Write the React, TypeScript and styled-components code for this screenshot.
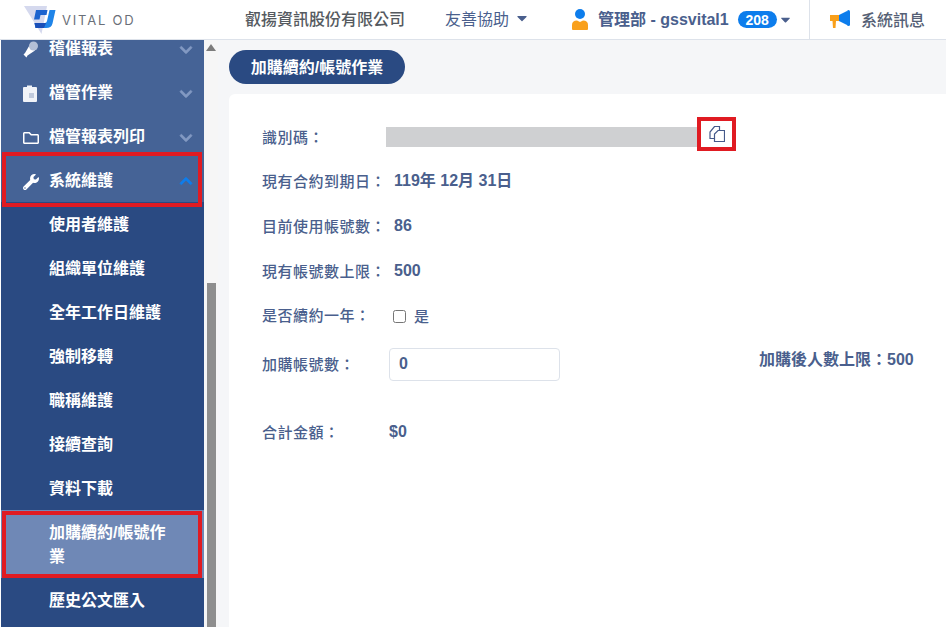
import React from "react";
import styled, { createGlobalStyle } from "styled-components";
import { FaChevronDown, FaChevronUp, FaCaretDown, FaWrench, FaRegFolder } from "react-icons/fa";

const Global = createGlobalStyle`
  html, body { margin: 0; padding: 0; height: 100%; overflow: hidden; background: #f5f6f8; }
  body { font-family: "Liberation Sans", "Noto Sans CJK TC", sans-serif; }
  #root { height: 100%; }
`;

const Page = styled.div`
  width: 946px; height: 627px; display: flex; flex-direction: column; overflow: hidden;
`;
const Header = styled.header`
  height: 40px; flex: none; box-sizing: border-box; display: flex; align-items: center;
  background: #fff; border-bottom: 1px solid #dde2ea;
`;
const LogoBox = styled.div`
  width: 245px; height: 39px; flex: none; display: flex; align-items: center; padding-left: 24px; box-sizing: border-box;
`;
const LogoText = styled.span`
  margin-left: 6px; font-family: "Inter", "Liberation Sans", sans-serif; font-size: 13px; letter-spacing: 1.8px; color: #6a6f78; white-space: nowrap;
`;
const Company = styled.span`
  font-size: 16px; font-weight: 500; color: #555a60; width: 200px; flex: none; white-space: nowrap; margin-bottom: 3px;
`;
const Help = styled.div`
  width: 127px; flex: none; display: flex; align-items: center; gap: 5px; font-size: 16px; color: #4a5f8d; white-space: nowrap; margin-bottom: 3px;
`;
const User = styled.div`
  width: 237px; flex: none; display: flex; align-items: center; font-weight: 700; color: #4a5f8d; white-space: nowrap;
`;
const UserName = styled.span`
  margin-left: 10px; margin-bottom: 3px; font-size: 16px;
`;
const Badge = styled.span`
  width: 39px; height: 17px; margin-left: 9px; margin-right: 1px; border-radius: 9px; background: #0d7dec; color: #fff; font-size: 14px; font-weight: 700; display: flex; align-items: center; justify-content: center;
`;
const Notice = styled.div`
  flex: 1; height: 39px; border-left: 1px solid #dde2ea; display: flex; align-items: center; padding-left: 20px; gap: 10px; font-size: 16px; font-weight: 500; color: #555f75; white-space: nowrap;
`;
const NoticeText = styled.span`
  margin-bottom: 2px;
`;

const Body = styled.div`
  flex: 1; display: flex; min-height: 0;
`;
const Side = styled.nav`
  width: 204px; flex: none; background: #2a4a82; overflow: hidden; position: relative;
  border-left: 1px solid #fff; box-sizing: border-box;
`;
const MenuList = styled.div`
  margin-top: -14px;
`;
const Parent = styled.div`
  height: 44px; display: flex; align-items: center; background: #456396; color: #fff; font-size: 16px; font-weight: 700; position: relative;
`;
const ParentIcon = styled.span`
  width: 48px; flex: none; display: flex; justify-content: center; padding-left: 20px; padding-right: 9px; margin-top: 3px; box-sizing: border-box;
  svg { flex: none; }
`;
const ParentLabel = styled.span`
  flex: 1; white-space: nowrap; margin-bottom: 2px;
`;
const Chevron = styled.span<{ $up?: boolean }>`
  width: 20px; margin-right: 8px; margin-top: ${p => (p.$up ? "1px" : "3px")}; flex: none; display: flex; justify-content: center; font-size: 14px; color: ${p => (p.$up ? "#0d7dec" : "#8299c2")};
  svg { stroke: currentColor; stroke-width: 24px; }
`;
const Child = styled.div<{ $active?: boolean }>`
  min-height: 44px; display: flex; align-items: center; padding: ${p => (p.$active ? "11px 30px 9px 48px" : "2px 30px 0 48px")}; box-sizing: border-box;
  background: ${p => (p.$active ? "#6f88b6" : "transparent")}; color: #fff; font-size: 16px; font-weight: 700; line-height: 24px; position: relative;
`;
const Mark = styled.span<{ $top: number; $bottom: number }>`
  position: absolute; left: 1px; right: 2px; top: ${p => p.$top}px; bottom: ${p => p.$bottom}px; border: 4px solid #e01b22; pointer-events: none;
`;
const Track = styled.div`
  width: 14px; flex: none; background: #f6f6f6; display: flex; flex-direction: column; align-items: center; padding-top: 4px; box-sizing: border-box;
`;
const Arrow = styled.span`
  width: 0; height: 0; border-left: 5px solid transparent; border-right: 5px solid transparent; border-bottom: 7px solid #7c7c7c; flex: none;
`;
const Thumb = styled.div`
  width: 9px; margin-top: 232px; flex: 1; background: #8e8e8e;
`;

const Main = styled.main`
  flex: 1; min-width: 0; padding: 10px 0 0 11px; display: flex; flex-direction: column; background: #f5f6f8;
`;
const Pill = styled.div`
  width: 176px; height: 34px; flex: none; border-radius: 17px; background: #2a4a82; color: #fff; font-size: 16px; font-weight: 700; display: flex; align-items: center; justify-content: center; white-space: nowrap;
`;
const PillText = styled.span`
  margin-bottom: 2px;
`;
const Card = styled.section`
  margin-top: 10px; flex: 1; background: #fff; border-radius: 6px 0 0 0; padding: 31px 0 0 33px; display: flex; flex-direction: column; color: #4a5f8d;
`;
const Row = styled.div<{ $gap: number }>`
  height: 24px; margin-bottom: ${p => p.$gap}px; display: flex; align-items: center; font-size: 15px; font-weight: 500; flex: none; white-space: nowrap;
`;
const Label = styled.span<{ $w?: number }>`
  width: ${p => p.$w ?? 124}px; flex: none; letter-spacing: 0.5px; margin-bottom: 2px;
`;
const Value = styled.span`
  font-weight: 700; font-size: 16px; line-height: 20px; margin-left: 8px;
`;
const Masked = styled.div`
  width: 311px; height: 20px; background: #cfd0d2; flex: none;
`;
const CopyBox = styled.div`
  width: 39px; height: 34px; margin-bottom: 6px; border: 4px solid #e01b22; box-sizing: border-box; display: flex; align-items: center; justify-content: center; background: #fff; flex: none;
`;
const Check = styled.input`
  width: 13px; height: 13px; margin: 3px 8px 0 0; flex: none;
`;
const CheckRow = styled.label`
  display: flex; align-items: center; margin-left: 7px; font-size: 15px;
`;
const Qty = styled.input`
  width: 171px; height: 33px; box-sizing: border-box; border: 1px solid #dde2ea; border-radius: 4px; padding: 0 9px; font: 700 16px "Liberation Sans", sans-serif; color: #4a5f8d; margin-left: 3px; outline: none;
`;
const After = styled.span`
  margin-left: 199px; margin-bottom: 12px; font-weight: 700; font-size: 16px;
`;

const Logo = () => (
  <svg width="32" height="30" viewBox="24 4 32 30">
    <path d="M24 5 L47 5 L41.500 33 Z" fill="#d5d9ee" />
    <path d="M36 9 L47.500 9 L46.500 14 L40.500 14 L39.500 18.500 L34 18.500 Z" fill="#1b63cf" />
    <path d="M49.500 9 L55.500 9 L52.500 22.500 Q51.500 27 46 27 L35.500 27 L34.500 22 L45 22 Q46.500 22 47 20 Z" fill="#1f84e8" />
    <path d="M34.500 22 L46 22 L44 27 L35.500 27 Z" fill="#1a4fb8" />
  </svg>
);
const PersonIcon = () => (
  <svg width="16" height="21" viewBox="0 0 16 21">
    <circle cx="8" cy="5" r="5" fill="#0d7dec" />
    <path d="M0 20 V16 Q0 11.500 5 11.500 L8 13 L11 11.500 Q16 11.500 16 16 V20 Q16 21 15 21 H1 Q0 21 0 20 Z" fill="#f9a01b" />
  </svg>
);
const Horn = () => (
  <svg width="21" height="19" viewBox="0 0 21 19">
    <path d="M0 5 H9 V11 H6 L5.500 18 H3 L2.500 11 H0 Z" fill="#f9a01b" />
    <path d="M9 5 L17 1 V15 L9 11 Z" fill="#0d7dec" />
    <rect x="17" y="0" width="3" height="16" rx="1.500" fill="#0d7dec" />
  </svg>
);
const Mic = () => (
  <svg width="16" height="17" viewBox="0 0 16 17">
    <path d="M7 3.500 L12 9.500 L4.500 14.500 L3.500 16.500 L0.500 13.500 L2 12 Z" fill="#fff" />
    <circle cx="10.500" cy="5" r="4.500" fill="#b3bfd6" />
  </svg>
);
const Clipboard = () => (
  <svg width="15" height="17" viewBox="0 0 15 17">
    <path d="M1 2 H4 V0.500 H9 V2 H13 Q14 2 14 3 V16 Q14 17 13 17 H1 Q0 17 0 16 V3 Q0 2 1 2 Z" fill="#f0f3f8" />
    <rect x="6" y="8" width="5" height="5" fill="#c0cadc" />
  </svg>
);
const CopyIcon = () => (
  <svg width="16" height="16" viewBox="0 0 16 16" fill="none" stroke="#45598a" strokeWidth="1.200">
    <path d="M5.500 12.500 H1 V6 L5.500 0.500 H10.500 V4.500" />
    <path d="M5.500 15.500 V8 L9 4.500 H15.500 V15.500 Z" />
  </svg>
);

const children = ["使用者維護", "組織單位維護", "全年工作日維護", "強制移轉", "職稱維護", "接續查詢", "資料下載"];

export default function App() {
  return (
    <Page>
      <Global />
      <Header>
        <LogoBox>
          <Logo />
          <LogoText>VITAL OD</LogoText>
        </LogoBox>
        <Company>叡揚資訊股份有限公司</Company>
        <Help>友善協助 <FaCaretDown size={16} color="#4a5f8d" /></Help>
        <User>
          <PersonIcon />
          <UserName>管理部 - gssvital1</UserName>
          <Badge>208</Badge>
          <FaCaretDown size={15} />
        </User>
        <Notice><Horn /><NoticeText>系統訊息</NoticeText></Notice>
      </Header>
      <Body>
        <Side>
          <MenuList>
            <Parent>
              <ParentIcon><Mic /></ParentIcon>
              <ParentLabel>稽催報表</ParentLabel>
              <Chevron><FaChevronDown /></Chevron>
            </Parent>
            <Parent>
              <ParentIcon><Clipboard /></ParentIcon>
              <ParentLabel>檔管作業</ParentLabel>
              <Chevron><FaChevronDown /></Chevron>
            </Parent>
            <Parent>
              <ParentIcon><FaRegFolder size={16} /></ParentIcon>
              <ParentLabel>檔管報表列印</ParentLabel>
              <Chevron><FaChevronDown /></Chevron>
            </Parent>
            <Parent>
              <ParentIcon><FaWrench size={16} /></ParentIcon>
              <ParentLabel>系統維護</ParentLabel>
              <Chevron $up><FaChevronUp /></Chevron>
              <Mark $top={-6} $bottom={-5} />
            </Parent>
            {children.map(c => <Child key={c}>{c}</Child>)}
            <Child $active>
              加購續約/帳號作業
              <Mark $top={1} $bottom={0} />
            </Child>
            <Child>歷史公文匯入</Child>
          </MenuList>
        </Side>
        <Track>
          <Arrow />
          <Thumb />
        </Track>
        <Main>
          <Pill><PillText>加購續約/帳號作業</PillText></Pill>
          <Card>
            <Row $gap={20}>
              <Label>識別碼：</Label>
              <Masked />
              <CopyBox><CopyIcon /></CopyBox>
            </Row>
            <Row $gap={21}><Label>現有合約到期日：</Label><Value>119年 12月 31日</Value></Row>
            <Row $gap={21}><Label>目前使用帳號數：</Label><Value>86</Value></Row>
            <Row $gap={20}><Label>現有帳號數上限：</Label><Value>500</Value></Row>
            <Row $gap={25}>
              <Label>是否續約一年：</Label>
              <CheckRow><Check type="checkbox" />是</CheckRow>
            </Row>
            <Row $gap={44}>
              <Label>加購帳號數：</Label>
              <Qty defaultValue="0" readOnly />
              <After>加購後人數上限：500</After>
            </Row>
            <Row $gap={0}><Label $w={119}>合計金額：</Label><Value>$0</Value></Row>
          </Card>
        </Main>
      </Body>
    </Page>
  );
}
